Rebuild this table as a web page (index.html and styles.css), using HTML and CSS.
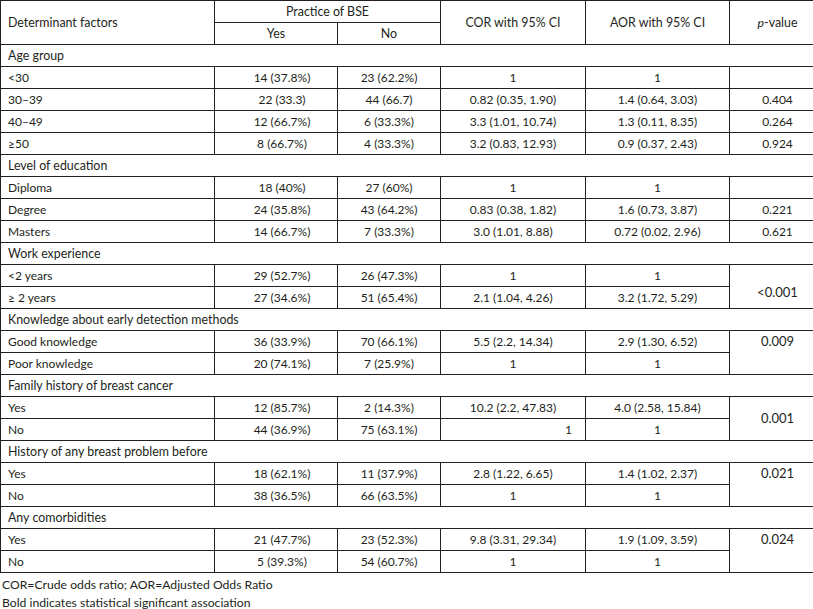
FILE: index.html
```html
<!DOCTYPE html>
<html>
<head>
<meta charset="utf-8">
<link rel="stylesheet" href="styles.css">
</head>
<body>
<table class="tbl">
  <colgroup>
    <col class="c1"><col class="c2"><col class="c3"><col class="c4"><col class="c5"><col class="c6">
  </colgroup>
  <thead>
    <tr>
      <th rowspan="2" class="h-left">Determinant factors</th>
      <th colspan="2">Practice of BSE</th>
      <th rowspan="2">COR with 95% CI</th>
      <th rowspan="2">AOR with 95% CI</th>
      <th rowspan="2" class="pcol"><i>p</i>-value</th>
    </tr>
    <tr>
      <th>Yes</th>
      <th>No</th>
    </tr>
  </thead>
  <tbody>
    <tr class="sec"><td colspan="6">Age group</td></tr>
    <tr><td class="lbl">&lt;30</td><td class="yes">14 (37.8%)</td><td>23 (62.2%)</td><td>1</td><td>1</td><td class="pcol"></td></tr>
    <tr><td class="lbl">30–39</td><td class="yes">22 (33.3)</td><td>44 (66.7)</td><td>0.82 (0.35, 1.90)</td><td>1.4 (0.64, 3.03)</td><td class="pcol">0.404</td></tr>
    <tr><td class="lbl">40–49</td><td class="yes">12 (66.7%)</td><td>6 (33.3%)</td><td>3.3 (1.01, 10.74)</td><td>1.3 (0.11, 8.35)</td><td class="pcol">0.264</td></tr>
    <tr><td class="lbl">≥50</td><td class="yes">8 (66.7%)</td><td>4 (33.3%)</td><td>3.2 (0.83, 12.93)</td><td>0.9 (0.37, 2.43)</td><td class="pcol">0.924</td></tr>

    <tr class="sec"><td colspan="6">Level of education</td></tr>
    <tr><td class="lbl">Diploma</td><td class="yes">18 (40%)</td><td>27 (60%)</td><td>1</td><td>1</td><td class="pcol"></td></tr>
    <tr><td class="lbl">Degree</td><td class="yes">24 (35.8%)</td><td>43 (64.2%)</td><td>0.83 (0.38, 1.82)</td><td>1.6 (0.73, 3.87)</td><td class="pcol">0.221</td></tr>
    <tr><td class="lbl">Masters</td><td class="yes">14 (66.7%)</td><td>7 (33.3%)</td><td>3.0 (1.01, 8.88)</td><td>0.72 (0.02, 2.96)</td><td class="pcol">0.621</td></tr>

    <tr class="sec"><td colspan="6">Work experience</td></tr>
    <tr><td class="lbl">&lt;2 years</td><td class="yes">29 (52.7%)</td><td>26 (47.3%)</td><td>1</td><td>1</td><td rowspan="2" class="pcol pbig plow">&lt;0.001</td></tr>
    <tr><td class="lbl">≥ 2 years</td><td class="yes">27 (34.6%)</td><td>51 (65.4%)</td><td>2.1 (1.04, 4.26)</td><td>3.2 (1.72, 5.29)</td></tr>

    <tr class="sec"><td colspan="6">Knowledge about early detection methods</td></tr>
    <tr><td class="lbl">Good knowledge</td><td class="yes">36 (33.9%)</td><td>70 (66.1%)</td><td>5.5 (2.2, 14.34)</td><td>2.9 (1.30, 6.52)</td><td rowspan="2" class="pcol pbig ptop">0.009</td></tr>
    <tr><td class="lbl">Poor knowledge</td><td class="yes">20 (74.1%)</td><td>7 (25.9%)</td><td>1</td><td>1</td></tr>

    <tr class="sec"><td colspan="6">Family history of breast cancer</td></tr>
    <tr><td class="lbl">Yes</td><td class="yes">12 (85.7%)</td><td>2 (14.3%)</td><td>10.2 (2.2, 47.83)</td><td>4.0 (2.58, 15.84)</td><td rowspan="2" class="pcol pbig">0.001</td></tr>
    <tr><td class="lbl">No</td><td class="yes">44 (36.9%)</td><td>75 (63.1%)</td><td class="right">1</td><td>1</td></tr>

    <tr class="sec"><td colspan="6">History of any breast problem before</td></tr>
    <tr><td class="lbl">Yes</td><td class="yes">18 (62.1%)</td><td>11 (37.9%)</td><td>2.8 (1.22, 6.65)</td><td>1.4 (1.02, 2.37)</td><td rowspan="2" class="pcol pbig ptop">0.021</td></tr>
    <tr><td class="lbl">No</td><td class="yes">38 (36.5%)</td><td>66 (63.5%)</td><td>1</td><td>1</td></tr>

    <tr class="sec"><td colspan="6">Any comorbidities</td></tr>
    <tr><td class="lbl">Yes</td><td class="yes">21 (47.7%)</td><td>23 (52.3%)</td><td>9.8 (3.31, 29.34)</td><td>1.9 (1.09, 3.59)</td><td rowspan="2" class="pcol pbig ptop">0.024</td></tr>
    <tr><td class="lbl">No</td><td class="yes">5 (39.3%)</td><td>54 (60.7%)</td><td>1</td><td>1</td></tr>
  </tbody>
</table>
<div class="notes">
  <p>COR=Crude odds ratio; AOR=Adjusted Odds Ratio</p>
  <p>Bold indicates statistical significant association</p>
</div>
</body>
</html>
```

FILE: styles.css
```css
html, body {
  margin: 0;
  padding: 0;
  background: #fff;
}
body {
  font-family: Lato, "Open Sans", sans-serif;
  color: #231f20;
}
.tbl {
  border-collapse: collapse;
  table-layout: fixed;
  width: 813px;
}
.c1 { width: 214px; }
.c2 { width: 123px; }
.c3 { width: 103px; }
.c4 { width: 145px; }
.c5 { width: 144px; }
.c6 { width: 84px; }

.tbl th, .tbl td {
  border: 1px solid #231f20;
  padding: 0 7px;
  height: 21px;
  line-height: 21px;
  text-align: center;
  font-weight: normal;
  white-space: nowrap;
}
.tbl th {
  font-size: 12.4px;
}
.tbl th.h-left {
  text-align: left;
}
.tbl td {
  font-size: 12px;
}
.tbl td.lbl {
  text-align: left;
}
.tbl td.yes {
  padding-left: 19px;
}
.tbl .pcol {
  padding-left: 19px;
}
.tbl td.right {
  text-align: right;
  padding-right: 13px;
}
.tbl tr.sec td {
  text-align: left;
  font-size: 12.4px;
}
.tbl td.pbig {
  font-size: 13px;
}
.tbl td.ptop {
  vertical-align: top;
}
.tbl td.plow {
  vertical-align: middle;
  padding-top: 12px;
}
.notes {
  padding: 3px 2px 0;
}
.notes p {
  margin: 0;
  font-size: 12.2px;
  line-height: 18px;
}
```
